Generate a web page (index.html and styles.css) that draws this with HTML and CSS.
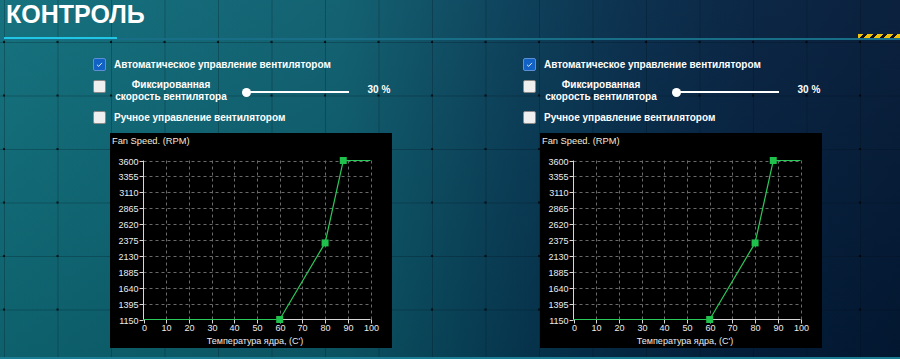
FILE: index.html
```html
<!DOCTYPE html>
<html>
<head>
  <meta name="viewport" content="width=device-width, initial-scale=1.0">
  <title>Контроль</title>
  <link rel="stylesheet" href="styles.css">
</head>
<body>
  <header class="topbar">
    <h1>КОНТРОЛЬ</h1>
    <div class="rule">
      <span class="rule-accent"></span>
      <span class="hazard"></span>
    </div>
  </header>

  <main class="panels">
    <section class="panel">
      <div class="options">
        <div class="option">
          <span class="check checked"><svg viewBox="0 0 13 13"><polyline points="3.5,6.8 5.6,8.7 9.4,4.6" /></svg></span>
          <span class="option-text">Автоматическое управление вентилятором</span>
        </div>
        <div class="option fixed">
          <span class="check"></span>
          <span class="fixed-label">Фиксированная<br>скорость вентилятора</span>
          <span class="slider"><span class="thumb"></span></span>
          <span class="percent">30 %</span>
        </div>
        <div class="option manual">
          <span class="check"></span>
          <span class="option-text">Ручное управление вентилятором</span>
        </div>
      </div>
      <div class="chart"></div>
    </section>

    <section class="panel">
      <div class="options">
        <div class="option">
          <span class="check checked"><svg viewBox="0 0 13 13"><polyline points="3.5,6.8 5.6,8.7 9.4,4.6" /></svg></span>
          <span class="option-text">Автоматическое управление вентилятором</span>
        </div>
        <div class="option fixed">
          <span class="check"></span>
          <span class="fixed-label">Фиксированная<br>скорость вентилятора</span>
          <span class="slider"><span class="thumb"></span></span>
          <span class="percent">30 %</span>
        </div>
        <div class="option manual">
          <span class="check"></span>
          <span class="option-text">Ручное управление вентилятором</span>
        </div>
      </div>
      <div class="chart"></div>
    </section>
  </main>

  <script>
    // fan curve: temperature (C) -> speed (RPM)
    var curve = [[0, 1150], [60, 1150], [80, 2330], [88, 3600], [100, 3600]];
    var markers = [[60, 1150], [80, 2330], [88, 3600]];

    var plotLeft = 33.5, plotRight = 260.5, plotTop = 27.5, plotBottom = 186.5;
    var minRpm = 1150, maxRpm = 3600;

    function px(t) { return plotLeft + t / 100 * (plotRight - plotLeft); }
    function py(v) { return plotBottom - (v - minRpm) / (maxRpm - minRpm) * (plotBottom - plotTop); }

    function buildChart() {
      var s = '<svg width="282" height="215" viewBox="0 0 282 215">';
      s += '<text class="title" x="2" y="11">Fan Speed. (RPM)</text>';

      for (var i = 0; i <= 10; i++) {
        var v = minRpm + i * 245;
        var y = Math.round(py(v)) + 0.5;
        if (i > 0) s += '<line class="grid" x1="' + plotLeft + '" y1="' + y + '" x2="' + plotRight + '" y2="' + y + '"/>';
        s += '<line class="axis" x1="' + (plotLeft - 4) + '" y1="' + y + '" x2="' + plotLeft + '" y2="' + y + '"/>';
        s += '<text class="ylab" x="' + (plotLeft - 5) + '" y="' + (y + 3) + '">' + v + '</text>';
      }

      for (var t = 0; t <= 100; t += 10) {
        var x = Math.round(px(t)) + 0.5;
        if (t > 0) s += '<line class="grid" x1="' + x + '" y1="' + plotTop + '" x2="' + x + '" y2="' + plotBottom + '"/>';
        s += '<line class="axis" x1="' + x + '" y1="' + plotBottom + '" x2="' + x + '" y2="' + (plotBottom + 4) + '"/>';
        s += '<text class="xlab" x="' + x + '" y="198">' + t + '</text>';
      }

      s += '<line class="axis" x1="' + plotLeft + '" y1="' + plotTop + '" x2="' + plotLeft + '" y2="' + plotBottom + '"/>';
      s += '<line class="axis" x1="' + plotLeft + '" y1="' + plotBottom + '" x2="' + plotRight + '" y2="' + plotBottom + '"/>';

      var pts = curve.map(function (p) { return px(p[0]) + ',' + py(p[1]); }).join(' ');
      s += '<polyline class="curve" points="' + pts + '"/>';
      markers.forEach(function (p) {
        s += '<rect class="marker" x="' + (px(p[0]) - 3.5) + '" y="' + (py(p[1]) - 3.5) + '" width="7" height="7"/>';
      });

      s += '<text class="xtitle" x="145" y="211">Температура ядра, (C\')</text>';
      s += '</svg>';
      return s;
    }

    var charts = document.querySelectorAll('.chart');
    for (var c = 0; c < charts.length; c++) {
      charts[c].innerHTML = buildChart();
    }
  </script>
</body>
</html>
```

FILE: styles.css
```css
html, body {
  margin: 0;
  padding: 0;
}

body {
  width: 900px;
  height: 359px;
  overflow: hidden;
  box-sizing: border-box;
  border-bottom: 2px solid #1a7d92;
  font-family: "Liberation Sans", Arial, sans-serif;
  color: #ffffff;
  background-color: #0a4a60;
  background-image:
    radial-gradient(circle, rgba(0, 0, 0, 0.75) 1px, transparent 1.6px),
    linear-gradient(to right, rgba(0, 10, 20, 0.24) 1px, transparent 1px),
    linear-gradient(to bottom, rgba(0, 10, 20, 0.24) 1px, transparent 1px),
    linear-gradient(to bottom, rgba(255, 255, 255, 0.03), rgba(0, 0, 0, 0.12)),
    linear-gradient(to right, #0f6e7b 0%, #0c5d6e 38%, #0a4c62 48%, #073b56 58%, #052b4a 70%, #04203f 84%, #031a37 100%);
  background-size:
    53.5px 53.5px,
    53.5px 53.5px,
    53.5px 53.5px,
    100% 100%,
    100% 100%;
  background-position:
    -22.75px 15.25px,
    4px 0,
    0 42px,
    0 0,
    0 0;
}

/* header */

.topbar {
  height: 40px;
}

.topbar h1 {
  margin: 0;
  padding-left: 6px;
  height: 34px;
  font-size: 25px;
  line-height: 28px;
  font-weight: bold;
}

.rule {
  display: flex;
  justify-content: space-between;
  align-items: flex-end;
  height: 4px;
  border-bottom: 2px solid #176e86;
}

.rule-accent {
  width: 113px;
  height: 2px;
  margin: 0 0 -1px 4px;
  background: #20c6e4;
}

.hazard {
  width: 42px;
  height: 4px;
  background: repeating-linear-gradient(135deg, #f0c20c 0, #f0c20c 4px, #0b0e14 4px, #0b0e14 7.07px);
}

/* panels */

.panels {
  display: grid;
  grid-template-columns: 430px 1fr;
  padding: 18px 0 0 93px;
}

.options {
  display: flex;
  flex-direction: column;
}

.option {
  display: flex;
  align-items: center;
  height: 13px;
  font-size: 10px;
  font-weight: bold;
  line-height: 13px;
}

.option-text {
  margin-left: 8px;
  white-space: nowrap;
}

.check {
  flex: none;
  width: 13px;
  height: 13px;
  box-sizing: border-box;
  border: 1px solid #8a8a8a;
  border-radius: 2px;
  background: #efefef;
}

.check.checked {
  border-color: #5d8fd2;
  background: #1262c6;
}

.check svg {
  display: block;
  width: 11px;
  height: 11px;
}

.check polyline {
  fill: none;
  stroke: #e8f0ff;
  stroke-width: 1.1;
}

.option.fixed {
  align-items: flex-start;
  height: 24px;
  margin-top: 9px;
}

.fixed-label {
  width: 118px;
  margin: -1px 0 0 6px;
  line-height: 12px;
  text-align: center;
}

.slider {
  position: relative;
  width: 107px;
  height: 9px;
  margin: 7.5px 0 0 11.5px;
}

.slider::before {
  content: "";
  position: absolute;
  left: 4px;
  right: 0;
  top: 3.5px;
  height: 2px;
  background: #ffffff;
}

.thumb {
  position: absolute;
  left: 0;
  top: 0;
  width: 9px;
  height: 9px;
  border-radius: 50%;
  background: #ffffff;
}

.percent {
  margin: 4px 0 0 19px;
  line-height: 12px;
  white-space: pre;
}

.option.manual {
  margin-top: 7px;
}

/* chart */

.chart {
  width: 282px;
  height: 215px;
  margin: 9px 0 0 17px;
  background: #000000;
}

.chart svg {
  display: block;
}

.chart text {
  font-family: "Liberation Sans", Arial, sans-serif;
  font-size: 9px;
  fill: #ececec;
}

.chart .title {
  font-size: 9.3px;
  fill: #f2ecd8;
}

.chart .ylab {
  text-anchor: end;
}

.chart .xlab,
.chart .xtitle {
  text-anchor: middle;
}

.chart .grid {
  stroke: #6a6a6a;
  stroke-width: 1;
  stroke-dasharray: 3 3;
}

.chart .axis {
  stroke: #d8d8d8;
  stroke-width: 1;
}

.chart .curve {
  fill: none;
  stroke: #2bc85a;
  stroke-width: 1.2;
}

.chart .marker {
  fill: #20c04c;
}
```
